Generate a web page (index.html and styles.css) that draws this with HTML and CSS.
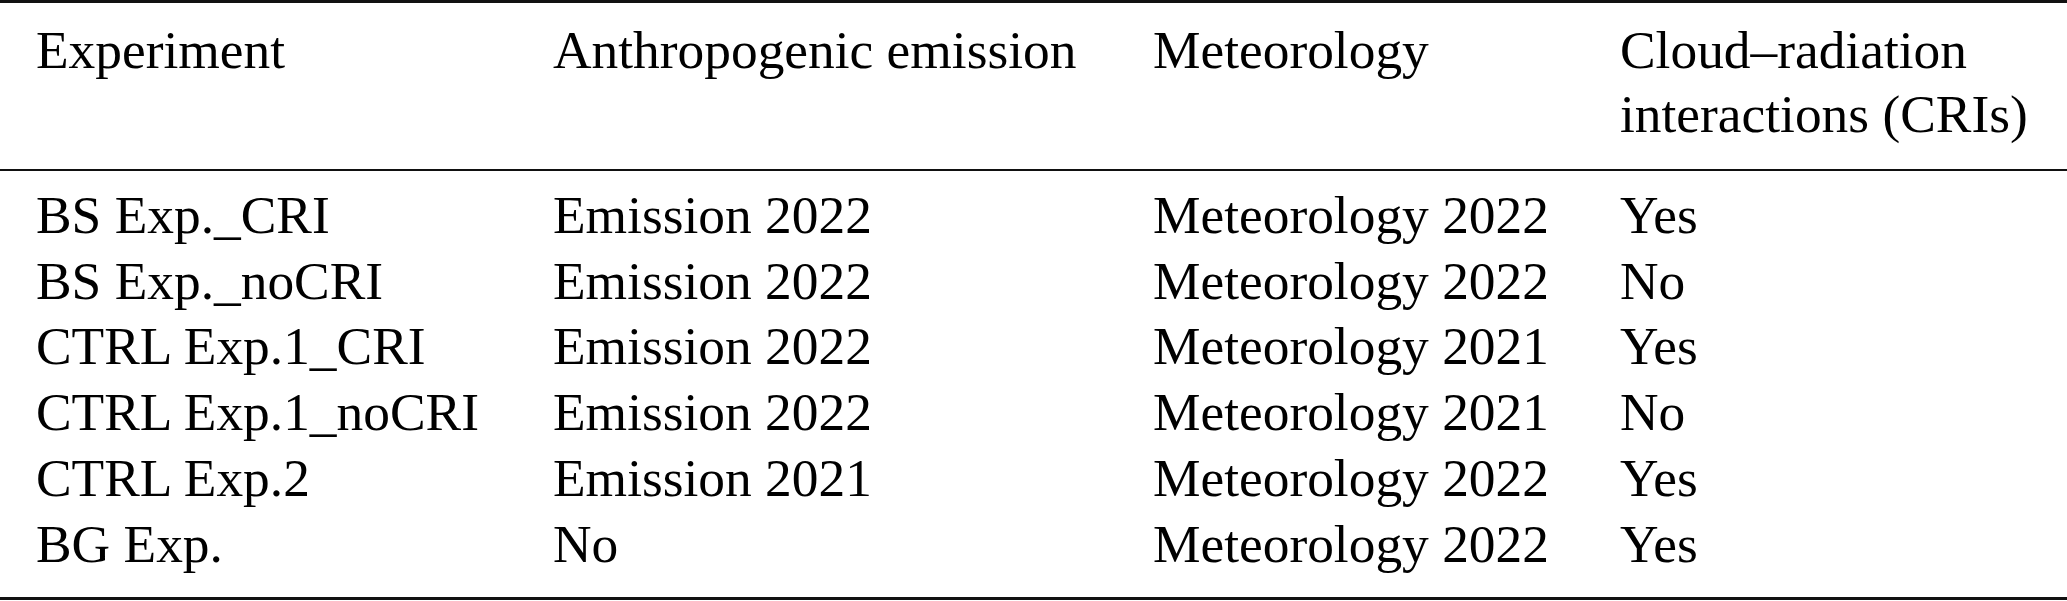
FILE: index.html
```html
<!DOCTYPE html>
<html lang="en">

<head>
    <meta charset="UTF-8">
    <meta name="viewport" content="width=device-width, initial-scale=1.0">
    <title>Experiments</title>
    <link rel="stylesheet" href="styles.css">
</head>

<body>
    <main>
        <!-- ====> Table of the model experiments -->
        <table class="expTable">
            <colgroup>
                <col class="colExp">
                <col class="colEmission">
                <col class="colMet">
                <col class="colCri">
            </colgroup>
            <thead>
                <tr>
                    <th>Experiment</th>
                    <th>Anthropogenic emission</th>
                    <th>Meteorology</th>
                    <th>Cloud–radiation interactions (CRIs)</th>
                </tr>
            </thead>
            <tbody>
                <tr>
                    <td>BS Exp._CRI</td>
                    <td>Emission 2022</td>
                    <td>Meteorology 2022</td>
                    <td>Yes</td>
                </tr>
                <tr>
                    <td>BS Exp._noCRI</td>
                    <td>Emission 2022</td>
                    <td>Meteorology 2022</td>
                    <td>No</td>
                </tr>
                <tr>
                    <td>CTRL Exp.1_CRI</td>
                    <td>Emission 2022</td>
                    <td>Meteorology 2021</td>
                    <td>Yes</td>
                </tr>
                <tr>
                    <td>CTRL Exp.1_noCRI</td>
                    <td>Emission 2022</td>
                    <td>Meteorology 2021</td>
                    <td>No</td>
                </tr>
                <tr>
                    <td>CTRL Exp.2</td>
                    <td>Emission 2021</td>
                    <td>Meteorology 2022</td>
                    <td>Yes</td>
                </tr>
                <tr>
                    <td>BG Exp.</td>
                    <td>No</td>
                    <td>Meteorology 2022</td>
                    <td>Yes</td>
                </tr>
            </tbody>
        </table>
    </main>
</body>

</html>
```

FILE: styles.css
```css
* {
    padding: 0;
    margin: 0;
    box-sizing: border-box;
}

body {
    background-color: #fff;
    color: #000;
    font-family: "Liberation Serif", "Times New Roman", serif;
    font-size: 53.4px;
}

.expTable {
    width: 2067px;
    border-collapse: collapse;
    table-layout: fixed;
    border-top: 3px solid #111;
    border-bottom: 3px solid #111;
}

.colExp {
    width: 517px;
}

.colEmission {
    width: 600px;
}

.colMet {
    width: 467px;
}

.colCri {
    width: 483px;
}

.expTable th,
.expTable td {
    text-align: left;
    vertical-align: top;
    font-weight: 400;
    padding: 0 36px;
}

.expTable thead {
    border-bottom: 2px solid #111;
}

.expTable th {
    line-height: 64px;
    padding-top: 15px;
    padding-bottom: 23px;
}

.expTable td {
    line-height: 65.7px;
    white-space: nowrap;
}

.expTable tbody tr:first-child td {
    padding-top: 12px;
}

.expTable tbody tr:last-child td {
    padding-bottom: 20px;
}
```
